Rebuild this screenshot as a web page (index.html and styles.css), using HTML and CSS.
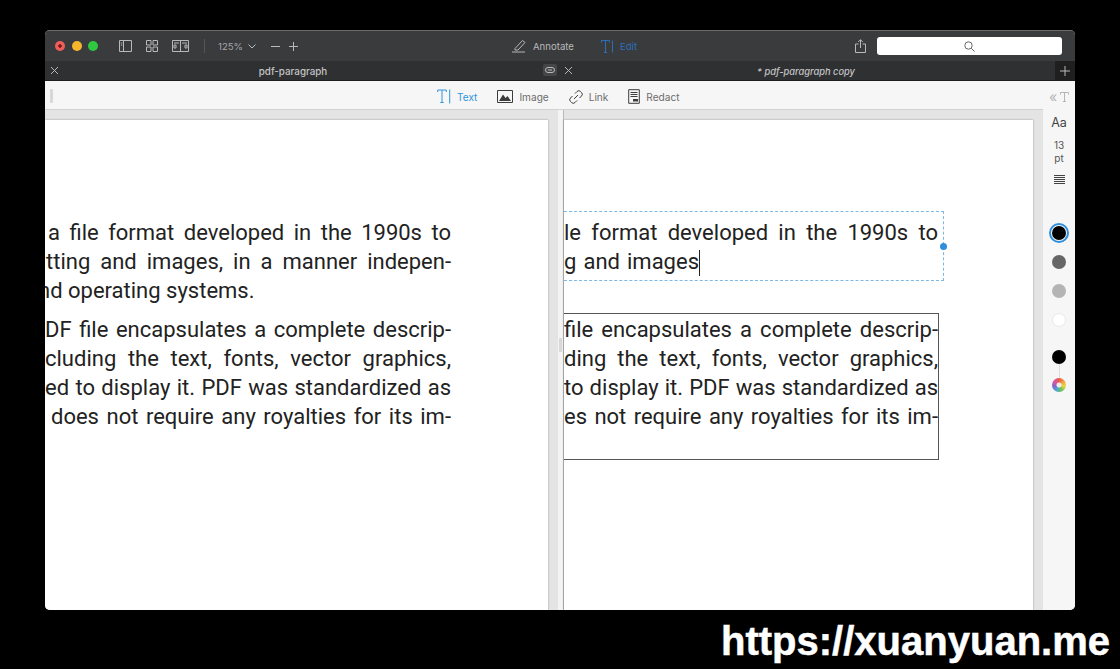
FILE: index.html
```html
<!DOCTYPE html>
<html lang="en">
<head>
    <meta charset="UTF-8">
    <title>pdf-paragraph</title>
    <link rel="stylesheet" href="styles.css">
</head>
<body>
    <div class="window">
        <div class="topbar">
            <div class="lights">
                <span class="light red"></span>
                <span class="light yellow"></span>
                <span class="light green"></span>
            </div>
            <div class="viewicons">
                <svg width="13" height="12" viewBox="0 0 13 12"><path d="M.5.5h12v11H.5zM4.5.5v11M1.800 3h1.500M1.800 5h1.500"/></svg>
                <svg width="12" height="12" viewBox="0 0 12 12"><path d="M.5.5h4.500v4.500H.5zM7 .5h4.500v4.500H7zM.5 7h4.500v4.500H.5zM7 7h4.500v4.500H7z"/></svg>
                <svg width="17" height="12" viewBox="0 0 17 12"><path d="M.5.5h16v11H.5zM8.500.5v11M2 3h5M2 5h2v3H2zM10 3h5M13 5h2v3h-2z"/></svg>
            </div>
            <span class="sep"></span>
            <span class="zoom">125%</span>
            <svg class="chev" width="8" height="5" viewBox="0 0 8 5"><path d="M.5.5 4 4 7.500.5"/></svg>
            <svg class="minus" width="9" height="9" viewBox="0 0 9 9"><path d="M0 4.500h9"/></svg>
            <svg class="plus" width="9" height="9" viewBox="0 0 9 9"><path d="M0 4.500h9M4.500 0v9"/></svg>
            <div class="mode annotate">
                <svg width="15" height="14" viewBox="0 0 15 14"><path d="M3 9.500 10.500 1.500 13 3.500 6 11H3zM0 13h13"/></svg>
                <span>Annotate</span>
            </div>
            <div class="mode edit">
                <svg width="13" height="13" viewBox="0 0 13 13"><path d="M.5 2.500V.5h8v2M4.500.5V12.500M3 12.500h3M11.500.5v12"/></svg>
                <span>Edit</span>
            </div>
            <svg class="share" width="11" height="14" viewBox="0 0 11 14"><path d="M3.500 5H.5v8.500h10V5h-3M5.500 9V.8M3.200 3 5.500.7 7.800 3"/></svg>
            <div class="search">
                <svg width="11" height="11" viewBox="0 0 11 11"><circle cx="4.500" cy="4.500" r="3.700"/><path d="m7.300 7.300 3.200 3.200"/></svg>
            </div>
        </div>

        <div class="tabs">
            <div class="tab tab-left">
                <svg class="tabx" width="7" height="7" viewBox="0 0 7 7"><path d="m0 0 7 7M7 0 0 7"/></svg>
                <span class="tabname">pdf-paragraph</span>
                <span class="tablink">
                    <svg width="10" height="6" viewBox="0 0 10 6"><rect x=".5" y=".5" width="9" height="5" rx="2.500"/><path d="M3 3h4"/></svg>
                </span>
            </div>
            <div class="tab tab-right">
                <svg class="tabx" width="7" height="7" viewBox="0 0 7 7"><path d="m0 0 7 7M7 0 0 7"/></svg>
                <span class="tabname italic">* pdf-paragraph copy</span>
            </div>
            <div class="tabadd">
                <svg width="10" height="10" viewBox="0 0 10 10"><path d="M0 5h10M5 0v10"/></svg>
            </div>
        </div>

        <div class="work">
            <div class="doc">
                <div class="toolbar">
                    <span class="grip"></span>
                    <div class="tool active">
                        <svg width="14" height="15" viewBox="0 0 14 15"><path d="M.7 3V1h8.600v2M5 1v12.500M3.300 13.500h3.400M12.700.5v14"/></svg>
                        <span>Text</span>
                    </div>
                    <div class="tool">
                        <svg width="16" height="13" viewBox="0 0 16 13"><path d="M.5.5h15v12H.5z"/><path class="fill" d="M2 11 6 4.500 8.500 8 10.500 6 14 11z"/></svg>
                        <span>Image</span>
                    </div>
                    <div class="tool">
                        <svg width="14" height="14" viewBox="0 0 14 14"><path d="M6 3.500 8 1.500a2.400 2.400 0 0 1 3.500 0l1 1a2.400 2.400 0 0 1 0 3.500L10.500 8M8 10.500 6 12.500a2.400 2.400 0 0 1-3.500 0l-1-1a2.400 2.400 0 0 1 0-3.500L3.500 6M5 9l4-4"/></svg>
                        <span>Link</span>
                    </div>
                    <div class="tool">
                        <svg width="12" height="15" viewBox="0 0 12 15"><path d="M.7.7h10.600v13.600H.7zM2.500 3.500h7M2.500 5.500h7M2.500 7.500h7"/><path class="fill" d="M5 10h5v2.500H5z"/></svg>
                        <span>Redact</span>
                    </div>
                </div>

                <div class="panes">
                    <div class="pane pane-left">
                        <div class="page">
                            <div class="para first">
                                <div class="line l1">a file format developed in the 1990s to</div>
                                <div class="line l2">tting and images, in a manner indepen-</div>
                                <div class="line last l3">nd operating systems.</div>
                            </div>
                            <div class="para">
                                <div class="line l4">DF file encapsulates a complete descrip-</div>
                                <div class="line l5">cluding the text, fonts, vector graphics,</div>
                                <div class="line l6">ed to display it. PDF was standardized as</div>
                                <div class="line l7">does not require any royalties for its im-</div>
                            </div>
                        </div>
                    </div>

                    <div class="divider"><span class="grip"></span></div>

                    <div class="pane pane-right">
                        <div class="page">
                            <div class="editbox">
                                <div class="line r1">le format developed in the 1990s to</div>
                                <div class="line r2">g and images<span class="caret"></span></div>
                                <span class="handle"></span>
                            </div>
                            <div class="textbox">
                                <div class="line r3">file encapsulates a complete descrip-</div>
                                <div class="line r4">ding the text, fonts, vector graphics,</div>
                                <div class="line r5">to display it. PDF was standardized as</div>
                                <div class="line r6">es not require any royalties for its im-</div>
                            </div>
                        </div>
                    </div>
                </div>
            </div>

            <div class="side">
                <div class="side-head">
                    <span class="chevs">«</span>
                    <svg width="9" height="10" viewBox="0 0 9 10"><path d="M.5 2.500V.5h8v2M4.500.5v9M3 9.500h3"/></svg>
                </div>
                <div class="aa">Aa</div>
                <div class="size">13<br>pt</div>
                <svg class="align" width="11" height="9" viewBox="0 0 11 9"><path d="M0 .5h11M0 2.500h11M0 4.500h11M0 6.500h11M0 8.500h11"/></svg>
                <span class="swatch ring"><span class="dot black"></span></span>
                <span class="swatch s-gray"></span>
                <span class="swatch s-light"></span>
                <span class="swatch s-white"></span>
                <span class="swatch s-black"></span>
                <span class="stem"></span>
                <span class="wheel"></span>
            </div>
        </div>
    </div>
    <div class="watermark">https://xuanyuan.me</div>
</body>
</html>
```

FILE: styles.css
```css
html, body {
    margin: 0;
    height: 669px;
    overflow: hidden;
    background-color: #000;
}
body {
    font-family: Inter, "Liberation Sans", sans-serif;
}
svg {
    display: block;
    flex: none;
    fill: none;
    stroke: currentColor;
    stroke-width: 1;
}
.window {
    width: 1030px;
    height: 580px;
    margin: 30px 0 0 45px;
    display: flex;
    flex-direction: column;
    border-radius: 5px;
    overflow: hidden;
    background-color: #f6f6f6;
}

/* title bar */
.topbar {
    height: 31px;
    flex: none;
    display: flex;
    align-items: center;
    background-color: #3a3b3d;
    border-top: 1px solid #6b6b6d;
    box-sizing: border-box;
    color: #b9b9ba;
    font-size: 9.6px;
}
.lights {
    display: flex;
    gap: 6.5px;
    margin-left: 10px;
}
.light {
    width: 10px;
    height: 10px;
    border-radius: 50%;
}
.red { background: radial-gradient(circle, #7c1a18 0 1.5px, #ee5f5a 2px); }
.yellow { background-color: #f6b72e; }
.green { background-color: #2fc840; }
.viewicons {
    display: flex;
    gap: 14px;
    margin-left: 21px;
}
.sep {
    width: 1px;
    height: 14px;
    margin: 0 13px 0 15px;
    background-color: #55565a;
}
.zoom { width: 30px; font-size: 9.6px; color: #a5a5a7; }
.chev { margin-right: 15px; }
.minus { margin-right: 9px; }
.mode {
    display: flex;
    align-items: center;
    gap: 6px;
}
.annotate { margin-left: 214px; }
.edit { margin-left: 27px; color: #2b6fb8; }
.share { margin-left: 218px; }
.search {
    width: 185px;
    height: 18px;
    margin-left: 11px;
    border-radius: 3px;
    background-color: #fff;
    color: #666;
    display: flex;
    align-items: center;
    justify-content: center;
}

/* tabs */
.tabs {
    height: 20px;
    flex: none;
    display: flex;
    background-color: #2f3032;
    border-bottom: 1px solid #1d1d1e;
    box-sizing: border-box;
    color: #b9b9ba;
    font-size: 9.8px;
}
.tab {
    position: relative;
    display: flex;
    align-items: center;
    justify-content: center;
    padding-top: 1px;
}
.tab-left { width: 512px; padding-right: 16px; box-sizing: border-box; }
.tab-right { width: 498px; box-sizing: border-box; }
.tabx {
    position: absolute;
    left: 6px;
    top: 6px;
}
.tab-right .tabx { left: 8px; }
.tabname { font-weight: 500; color: #c4c4c5; }
.italic { font-size: 9.3px; font-style: italic; }
.tablink {
    position: absolute;
    right: 0;
    top: 3px;
    width: 14px;
    height: 12px;
    border-radius: 2px;
    background-color: #454648;
    display: flex;
    align-items: center;
    justify-content: center;
}
.tabadd {
    width: 20px;
    background-color: #1f1f20;
    display: flex;
    align-items: center;
    justify-content: center;
}

/* document area */
.work {
    flex: 1;
    display: flex;
    min-height: 0;
}
.doc {
    flex: 1;
    display: flex;
    flex-direction: column;
}
.toolbar {
    height: 29px;
    flex: none;
    position: relative;
    display: flex;
    align-items: center;
    padding: 3px 0 0 392px;
    background-color: #f6f6f6;
    border-bottom: 1px solid #d2d2d2;
    box-sizing: border-box;
    font-size: 10.1px;
    color: #6d6d6d;
}
.grip {
    position: absolute;
    width: 3px;
    height: 14px;
    border-radius: 1px;
    background-color: #d8d8d8;
}
.toolbar .grip { left: 5px; top: 8px; }
.tool {
    display: flex;
    align-items: center;
    gap: 6px;
    margin-right: 20px;
    color: #3c3c3c;
}
.tool span { color: #6d6d6d; }
.tool .fill { fill: currentColor; stroke: none; }
.tool.active, .tool.active span { color: #2f95dc; }

.panes {
    flex: 1;
    display: flex;
    min-height: 0;
}
.pane {
    background-color: #e4e4e4;
    padding-top: 10px;
    box-sizing: border-box;
}
.pane-left { width: 513px; padding-right: 10px; }
.pane-right { width: 479px; padding-right: 10px; }
.divider {
    width: 6px;
    position: relative;
    background-color: #f4f4f4;
    border-right: 1px solid #b9b9b9;
    box-sizing: border-box;
}
.divider .grip { left: 1px; top: 228px; }
.page {
    height: 100%;
    position: relative;
    overflow: hidden;
    background-color: #fff;
    box-shadow: 0 0 2px rgba(0, 0, 0, .35);
    font-family: Roboto, sans-serif;
    font-size: 22px;
    line-height: 29px;
    color: #222;
}
.line {
    text-align: justify;
    text-align-last: justify;
    white-space: nowrap;
}
.line.last { text-align-last: left; }

/* left page text, each line is clipped by the page edge */
.para { margin-top: 10px; width: 406px; }
.para.first { margin-top: 98px; }
.l1 { margin-left: 3px; }
.l2 { margin-left: 1px; }
.l3 { margin-left: -7px; }
.l7 { margin-left: 6px; }

/* right page boxes */
.editbox {
    position: relative;
    width: 380px;
    height: 70px;
    margin-top: 91px;
    padding-top: 6px;
    box-sizing: border-box;
    border: 1px dashed #7db9e6;
    border-left: 0;
}
.editbox .line { width: 374px; }
.editbox .r2 { width: 136px; }
.handle {
    position: absolute;
    right: -4px;
    top: 31px;
    width: 7px;
    height: 7px;
    border-radius: 50%;
    background-color: #2f8fdc;
}
.caret {
    display: inline-block;
    width: 1px;
    height: 26px;
    vertical-align: -7px;
    background-color: #222;
}
.textbox {
    width: 375px;
    height: 147px;
    margin-top: 32px;
    padding-top: 1px;
    box-sizing: border-box;
    border: 1px solid #555;
    border-left: 0;
}

/* right sidebar */
.side {
    width: 32px;
    flex: none;
    display: flex;
    flex-direction: column;
    align-items: center;
    background-color: #f6f6f6;
    color: #555;
    font-size: 11px;
}
.side-head {
    display: flex;
    align-items: center;
    gap: 3px;
    height: 31px;
    color: #b5b5b5;
}
.chevs { font-size: 14px; }
.aa { margin-top: 3px; font-size: 12.5px; line-height: 16px; color: #444; }
.size { margin-top: 8px; text-align: center; font-size: 10px; line-height: 13px; }
.align { margin-top: 10px; color: #444; }
.swatch {
    width: 14px;
    height: 14px;
    flex: none;
    border-radius: 50%;
}
.ring {
    width: 20px;
    height: 20px;
    margin-top: 39px;
    border: 2px solid #2f8fdc;
    box-sizing: border-box;
    display: flex;
    align-items: center;
    justify-content: center;
}
.dot { width: 14px; height: 14px; border-radius: 50%; }
.black { background-color: #000; }
.s-gray { margin-top: 12px; background-color: #666; }
.s-light { margin-top: 15px; background-color: #b4b4b4; }
.s-white { margin-top: 15px; background-color: #fff; border: 1px solid #e8e8e8; box-sizing: border-box; }
.s-black { margin-top: 23px; background-color: #000; }
.stem { width: 1px; height: 14px; background-color: #dcdcdc; }
.wheel {
    width: 14px;
    height: 14px;
    border-radius: 50%;
    background: radial-gradient(circle, #eee 0 2px, transparent 3px),
        conic-gradient(#e8574f, #f2a33c, #e6d94a, #6cc35a, #4aa8d8, #8a63c8, #d85aa0, #e8574f);
}

.watermark {
    margin-top: 9px;
    padding-right: 10px;
    text-align: right;
    font-family: "Liberation Sans", sans-serif;
    font-weight: 700;
    font-size: 40px;
    line-height: 45px;
    color: #fff;
    -webkit-text-stroke: .5px #fff;
}
```
